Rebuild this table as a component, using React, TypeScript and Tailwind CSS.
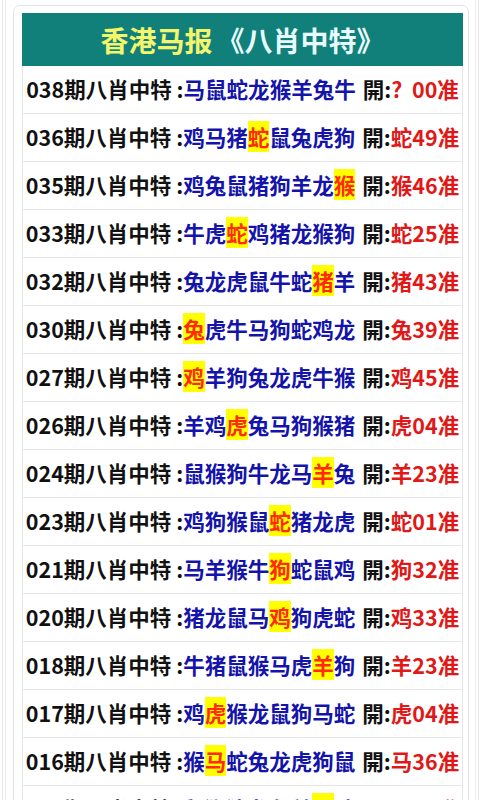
const rows: { no: string; animals: string; hit: number; result: string }[] = [
  { no: '038', animals: '马鼠蛇龙猴羊兔牛', hit: -1, result: '' },
  { no: '036', animals: '鸡马猪蛇鼠兔虎狗', hit: 3, result: '蛇49准' },
  { no: '035', animals: '鸡兔鼠猪狗羊龙猴', hit: 7, result: '猴46准' },
  { no: '033', animals: '牛虎蛇鸡猪龙猴狗', hit: 2, result: '蛇25准' },
  { no: '032', animals: '兔龙虎鼠牛蛇猪羊', hit: 6, result: '猪43准' },
  { no: '030', animals: '兔虎牛马狗蛇鸡龙', hit: 0, result: '兔39准' },
  { no: '027', animals: '鸡羊狗兔龙虎牛猴', hit: 0, result: '鸡45准' },
  { no: '026', animals: '羊鸡虎兔马狗猴猪', hit: 2, result: '虎04准' },
  { no: '024', animals: '鼠猴狗牛龙马羊兔', hit: 6, result: '羊23准' },
  { no: '023', animals: '鸡狗猴鼠蛇猪龙虎', hit: 4, result: '蛇01准' },
  { no: '021', animals: '马羊猴牛狗蛇鼠鸡', hit: 4, result: '狗32准' },
  { no: '020', animals: '猪龙鼠马鸡狗虎蛇', hit: 4, result: '鸡33准' },
  { no: '018', animals: '牛猪鼠猴马虎羊狗', hit: 6, result: '羊23准' },
  { no: '017', animals: '鸡虎猴龙鼠狗马蛇', hit: 1, result: '虎04准' },
  { no: '016', animals: '猴马蛇兔龙虎狗鼠', hit: 1, result: '马36准' },
  { no: '015', animals: '鼠狗猪龙兔羊马鸡', hit: 6, result: '马12准' },
];

export default function App() {
  return (
    <div className="min-h-[800px] bg-white font-['Noto_Sans_CJK_SC','Noto_Sans',sans-serif]">
      <div className="ml-[2px] mr-[3px] min-h-[800px] border-x border-[#e6e6e6]">
        <div className="mx-[2px] min-h-[800px] border-x border-[#ececec] pt-[5px]">
          <div className="ml-[7px] mr-[6px] rounded-[7px] border border-[#e2e2e2] pb-2 pl-2 pr-[5px] pt-[7px]">
            <div className="flex h-[53px] items-center justify-center bg-[#12807a] text-[28px] font-bold">
              <span className="text-[#f4f56c]">香港马报</span>
              <span className="ml-1 text-[#e8fbff]">《八肖中特》</span>
            </div>
            {rows.map((r) => (
              <div
                key={r.no}
                className="flex h-[48px] items-center justify-center whitespace-nowrap border-x border-b border-[#e6e6e6] bg-white text-[21.5px] font-bold"
              >
                <span className="text-[#111]">{r.no}期八肖中特 :</span>
                <span className="text-[#1414aa]">
                  {r.animals.split('').map((a, i) =>
                    i === r.hit ? (
                      <span key={i} className="bg-[#ffff00] text-[#ff2a00]">
                        {a}
                      </span>
                    ) : (
                      <span key={i}>{a}</span>
                    )
                  )}
                </span>
                <span className="ml-[7px] text-[#111]">開:</span>
                {r.hit < 0 ? (
                  <span className="text-[#e01818]">? &nbsp;00准</span>
                ) : (
                  <span className="text-[#e01818]">{r.result}</span>
                )}
              </div>
            ))}
          </div>
        </div>
      </div>
    </div>
  );
}
